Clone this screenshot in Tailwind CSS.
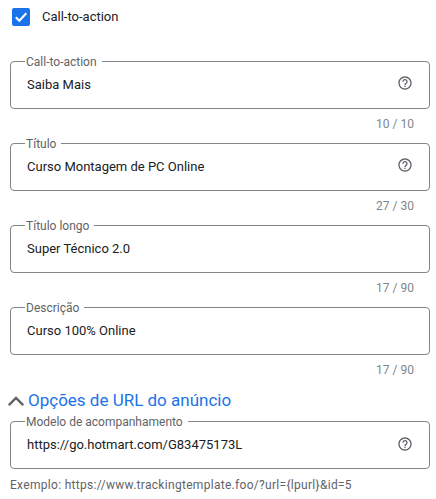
<!DOCTYPE html>
<html lang="en">
<head>
  <meta charset="UTF-8">
  <title>Call-to-action</title>
  <script src="https://cdn.jsdelivr.net/npm/@tailwindcss/browser@4"></script>
</head>
<body class="bg-white font-['Roboto',sans-serif] overflow-hidden">
  <div class="w-[436px] h-[499px] overflow-hidden pl-[10px] pr-[6px]">
    <!-- Checkbox -->
    <div class="flex items-center h-[34px] pl-[2px]">
      <div class="w-[18px] h-[18px] rounded-[2px] bg-[#1a73e8] flex items-center justify-center">
        <svg class="w-[14px] h-[14px]" viewBox="0 0 14 14" fill="none" stroke="white" stroke-width="2"><path d="M1.8 7.2l3.5 3.5 7-7.4"/></svg>
      </div>
      <span class="ml-[12px] text-[13px] text-[#202124]">Call-to-action</span>
    </div>

    <!-- Call-to-action -->
    <fieldset class="mt-[19px] h-[56px] border border-[#80868b] rounded-[4px] pl-[16px] pr-[16px] flex items-center">
      <legend class="ml-[-2px] px-[1px] pr-[5px] pt-[2px] text-[12px] leading-[14px] text-[#5f6368]">Call-to-action</legend>
      <div class="flex items-center justify-between w-full h-[47px] pb-[7px] text-[13px] text-[#202124]">
        <span>Saiba Mais</span>
        <svg class="w-[16px] h-[16px] mb-[4px] text-[#5f6368]" viewBox="0 0 24 24" fill="currentColor"><path d="M11 18h2v-2h-2v2zm1-16C6.48 2 2 6.48 2 12s4.48 10 10 10 10-4.48 10-10S17.52 2 12 2zm0 18c-4.41 0-8-3.59-8-8s3.59-8 8-8 8 3.59 8 8-3.59 8-8 8zm0-14c-2.21 0-4 1.79-4 4h2c0-1.1.9-2 2-2s2 .9 2 2c0 2-3 1.75-3 5h2c0-2.25 3-2.5 3-5 0-2.21-1.79-4-4-4z"/></svg>
      </div>
    </fieldset>
    <div class="h-[26px] pt-[8px] pr-[16px] text-right text-[12px] leading-[14px] text-[#80868b]">10 / 10</div>

    <!-- Titulo -->
    <fieldset class="h-[56px] border border-[#80868b] rounded-[4px] pl-[16px] pr-[16px] flex items-center">
      <legend class="ml-[-2px] px-[1px] pr-[5px] pt-[2px] text-[12px] leading-[14px] text-[#5f6368]">Título</legend>
      <div class="flex items-center justify-between w-full h-[47px] pb-[7px] text-[13px] text-[#202124]">
        <span>Curso Montagem de PC Online</span>
        <svg class="w-[16px] h-[16px] mb-[4px] text-[#5f6368]" viewBox="0 0 24 24" fill="currentColor"><path d="M11 18h2v-2h-2v2zm1-16C6.48 2 2 6.48 2 12s4.48 10 10 10 10-4.48 10-10S17.52 2 12 2zm0 18c-4.41 0-8-3.59-8-8s3.59-8 8-8 8 3.59 8 8-3.59 8-8 8zm0-14c-2.21 0-4 1.79-4 4h2c0-1.1.9-2 2-2s2 .9 2 2c0 2-3 1.75-3 5h2c0-2.25 3-2.5 3-5 0-2.21-1.79-4-4-4z"/></svg>
      </div>
    </fieldset>
    <div class="h-[26px] pt-[8px] pr-[16px] text-right text-[12px] leading-[14px] text-[#80868b]">27 / 30</div>

    <!-- Titulo longo -->
    <fieldset class="h-[56px] border border-[#80868b] rounded-[4px] pl-[16px] pr-[16px] flex items-center">
      <legend class="ml-[-2px] px-[1px] pr-[5px] pt-[2px] text-[12px] leading-[14px] text-[#5f6368]">Título longo</legend>
      <div class="flex items-center w-full h-[47px] pb-[7px] text-[13px] text-[#202124]">Super Técnico 2.0</div>
    </fieldset>
    <div class="h-[26px] pt-[8px] pr-[16px] text-right text-[12px] leading-[14px] text-[#80868b]">17 / 90</div>

    <!-- Descricao -->
    <fieldset class="h-[56px] border border-[#80868b] rounded-[4px] pl-[16px] pr-[16px] flex items-center">
      <legend class="ml-[-2px] px-[1px] pr-[5px] pt-[2px] text-[12px] leading-[14px] text-[#5f6368]">Descrição</legend>
      <div class="flex items-center w-full h-[47px] pb-[7px] text-[13px] text-[#202124]">Curso 100% Online</div>
    </fieldset>
    <div class="h-[27px] pt-[8px] pr-[16px] text-right text-[12px] leading-[14px] text-[#80868b]">17 / 90</div>

    <!-- URL options -->
    <div class="flex items-center h-[24px] mt-[7px]">
      <svg class="w-[16px] h-[10px] ml-[-2px] text-[#5f6368]" viewBox="0 0 16 10" fill="none" stroke="currentColor" stroke-width="2.4"><path d="M.8 9.2 8 2l7.2 7.2"/></svg>
      <span class="ml-[4px] text-[17px] text-[#1a73e8]">Opções de URL do anúncio</span>
    </div>

    <fieldset class="h-[56px] border border-[#80868b] rounded-[4px] pl-[16px] pr-[16px] flex items-center">
      <legend class="ml-[-2px] px-[1px] pr-[5px] pt-[2px] text-[12px] leading-[14px] text-[#5f6368]">Modelo de acompanhamento</legend>
      <div class="flex items-center justify-between w-full h-[47px] pb-[7px] text-[13px] text-[#202124]">
        <span>https://go.hotmart.com/G83475173L</span>
        <svg class="w-[16px] h-[16px] mb-[2px] text-[#5f6368]" viewBox="0 0 24 24" fill="currentColor"><path d="M11 18h2v-2h-2v2zm1-16C6.48 2 2 6.48 2 12s4.48 10 10 10 10-4.48 10-10S17.52 2 12 2zm0 18c-4.41 0-8-3.59-8-8s3.59-8 8-8 8 3.59 8 8-3.59 8-8 8zm0-14c-2.21 0-4 1.79-4 4h2c0-1.1.9-2 2-2s2 .9 2 2c0 2-3 1.75-3 5h2c0-2.25 3-2.5 3-5 0-2.21-1.79-4-4-4z"/></svg>
      </div>
    </fieldset>
    <div class="pt-[9px] text-[12px] leading-[14px] tracking-[0.3px] text-[#5f6368]">Exemplo: https://www.trackingtemplate.foo/?url={lpurl}&amp;id=5</div>
  </div>
</body>
</html>
